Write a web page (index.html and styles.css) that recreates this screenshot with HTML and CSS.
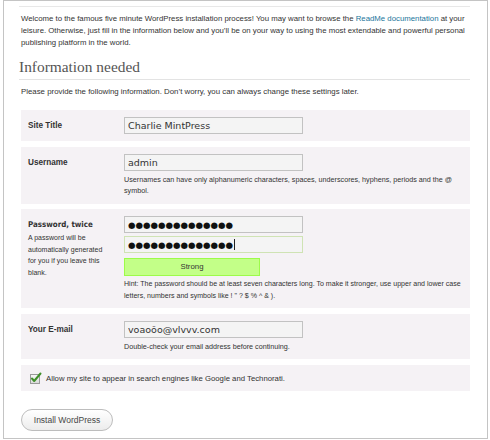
FILE: index.html
```html
<!DOCTYPE html>
<html>
<head>
<meta charset="utf-8">
<link rel="stylesheet" href="styles.css">
</head>
<body>
<div class="frame">
  <div class="logo-rule"></div>
  <p class="intro">Welcome to the famous five minute WordPress installation process! You may want to browse the <a href="#">ReadMe documentation</a> at your leisure. Otherwise, just fill in the information below and you’ll be on your way to using the most extendable and powerful personal publishing platform in the world.</p>
  <h1 class="title">Information needed</h1>
  <p class="lead">Please provide the following information. Don’t worry, you can always change these settings later.</p>

  <div class="form-table">
    <div class="row">
      <div class="label"><b>Site Title</b></div>
      <div class="field"><input class="text" type="text" value="Charlie MintPress"></div>
    </div>
    <div class="row">
      <div class="label"><b>Username</b></div>
      <div class="field">
        <input class="text" type="text" value="admin">
        <p class="desc">Usernames can have only alphanumeric characters, spaces, underscores, hyphens, periods and the @ symbol.</p>
      </div>
    </div>
    <div class="row">
      <div class="label">
        <b class="pw-label">Password, twice</b>
        <p class="label-desc">A password will be automatically generated for you if you leave this blank.</p>
      </div>
      <div class="field">
        <input class="text dots" type="text" value="●●●●●●●●●●●●●●">
        <div class="caret-wrap"><input class="text dots good" type="text" value="●●●●●●●●●●●●●●"><span class="caret"></span></div>
        <div class="strength">Strong</div>
        <p class="desc hint">Hint: The password should be at least seven characters long. To make it stronger, use upper and lower case letters, numbers and symbols like ! " ? $ % ^ &amp; ).</p>
      </div>
    </div>
    <div class="row">
      <div class="label"><b>Your E-mail</b></div>
      <div class="field">
        <input class="text" type="text" value="voaoŏo@vlvvv.com">
        <p class="desc">Double-check your email address before continuing.</p>
      </div>
    </div>
    <div class="row check-row">
      <label class="check">
        <svg class="box" width="13" height="13" viewBox="0 0 13 13">
          <defs><linearGradient id="g" x1="0" y1="0" x2="0" y2="1"><stop offset="0" stop-color="#fafafa"/><stop offset="1" stop-color="#d8d8d8"/></linearGradient></defs>
          <rect x="0.5" y="2.5" width="9" height="9" fill="url(#g)" stroke="#9a9a9a"/>
          <path d="M2 6.5 L4.2 9 L10.5 1.5" fill="none" stroke="#3f8f2a" stroke-width="2" stroke-linecap="round" stroke-linejoin="round"/>
        </svg>
        Allow my site to appear in search engines like Google and Technorati.
      </label>
    </div>
  </div>

  <button class="button" type="button">Install WordPress</button>
</div>
</body>
</html>
```

FILE: styles.css
```css
html, body {
  margin: 0;
  padding: 0;
  background: #fff;
}
body {
  font-family: "Liberation Sans", Arial, sans-serif;
  color: #333;
}
.frame {
  box-sizing: border-box;
  margin-left: 3px;
  width: 485px;
  height: 439px;
  border: 1px solid #c4c4c4;
  padding: 0 17px 0 15px;
  background: #fff;
}
.logo-rule {
  height: 5px;
  border-bottom: 1px solid #e8e8e8;
}
.intro {
  margin: 6px 0 0;
  padding-left: 2px;
  font-size: 7.8px;
  line-height: 12px;
}
.intro a {
  color: #21759b;
  text-decoration: none;
}
.title {
  margin: 8px 0 0;
  padding: 0 0 2px 0;
  height: 20px;
  font-family: "Liberation Serif", Georgia, serif;
  font-weight: normal;
  font-size: 15.4px;
  line-height: 20px;
  color: #555;
  border-bottom: 1px solid #e3e3e3;
}
.lead {
  margin: 6px 0 0;
  padding-left: 2px;
  font-size: 7.85px;
  line-height: 12px;
}
.form-table {
  margin: 12px 0 0 2px;
  display: flex;
  flex-direction: column;
  gap: 5.5px;
}
.row {
  display: grid;
  grid-template-columns: 103px 1fr;
  background: #f5f2f5;
  padding: 7px 4px 7px 0;
}
.label {
  padding-left: 7px;
  padding-top: 3px;
  font-size: 8.2px;
  line-height: 11px;
}
.label b {
  font-weight: bold;
}
.pw-label {
  display: block;
  font-family: "DejaVu Sans Condensed", "DejaVu Sans", sans-serif;
  font-stretch: condensed;
  font-size: 7.9px;
  color: #333;
}
.label-desc {
  margin: 2px 0 0;
  font-size: 7px;
  line-height: 11.5px;
  padding-right: 20px;
}
.field {
  display: flex;
  flex-direction: column;
  align-items: flex-start;
}
.text {
  box-sizing: border-box;
  width: 179px;
  height: 17px;
  margin: 0;
  padding: 0 3px;
  border: 1px solid #c2c2c2;
  background: #f4f4f4;
  font-family: "DejaVu Sans", sans-serif;
  font-size: 9.5px;
  color: #333;
  outline: none;
}
.dots {
  font-size: 8.6px;
  color: #111;
}
.good {
  border-color: #cfe3b4;
}
.caret-wrap {
  position: relative;
  display: flex;
  margin-top: 3px;
}
.caret {
  position: absolute;
  left: 110px;
  top: 3px;
  width: 1px;
  height: 11px;
  background: #222;
}
.strength {
  box-sizing: border-box;
  margin-top: 5px;
  width: 136px;
  height: 18px;
  background: #c3ff88;
  border: 1px solid #9dfb4a;
  text-align: center;
  font-size: 7.8px;
  line-height: 16px;
  color: #333;
}
.desc {
  margin: 3px 0 0;
  font-size: 7.2px;
  line-height: 11.5px;
}
.hint {
  margin-top: 2px;
  font-size: 7.05px;
}
.check-row {
  display: block;
  padding: 7px 8px 6px 9px;
}
.check {
  display: flex;
  align-items: center;
  gap: 3px;
  font-size: 7.75px;
  line-height: 13px;
}
.box {
  flex: none;
}
.button {
  display: block;
  margin: 18px 0 0 2px;
  box-sizing: border-box;
  width: 92px;
  height: 22px;
  padding: 0;
  border: 1px solid #bdbdbd;
  border-radius: 11px;
  background: linear-gradient(#ffffff, #ececec);
  font-family: "Liberation Sans", Arial, sans-serif;
  font-size: 8.5px;
  color: #464646;
}
```
